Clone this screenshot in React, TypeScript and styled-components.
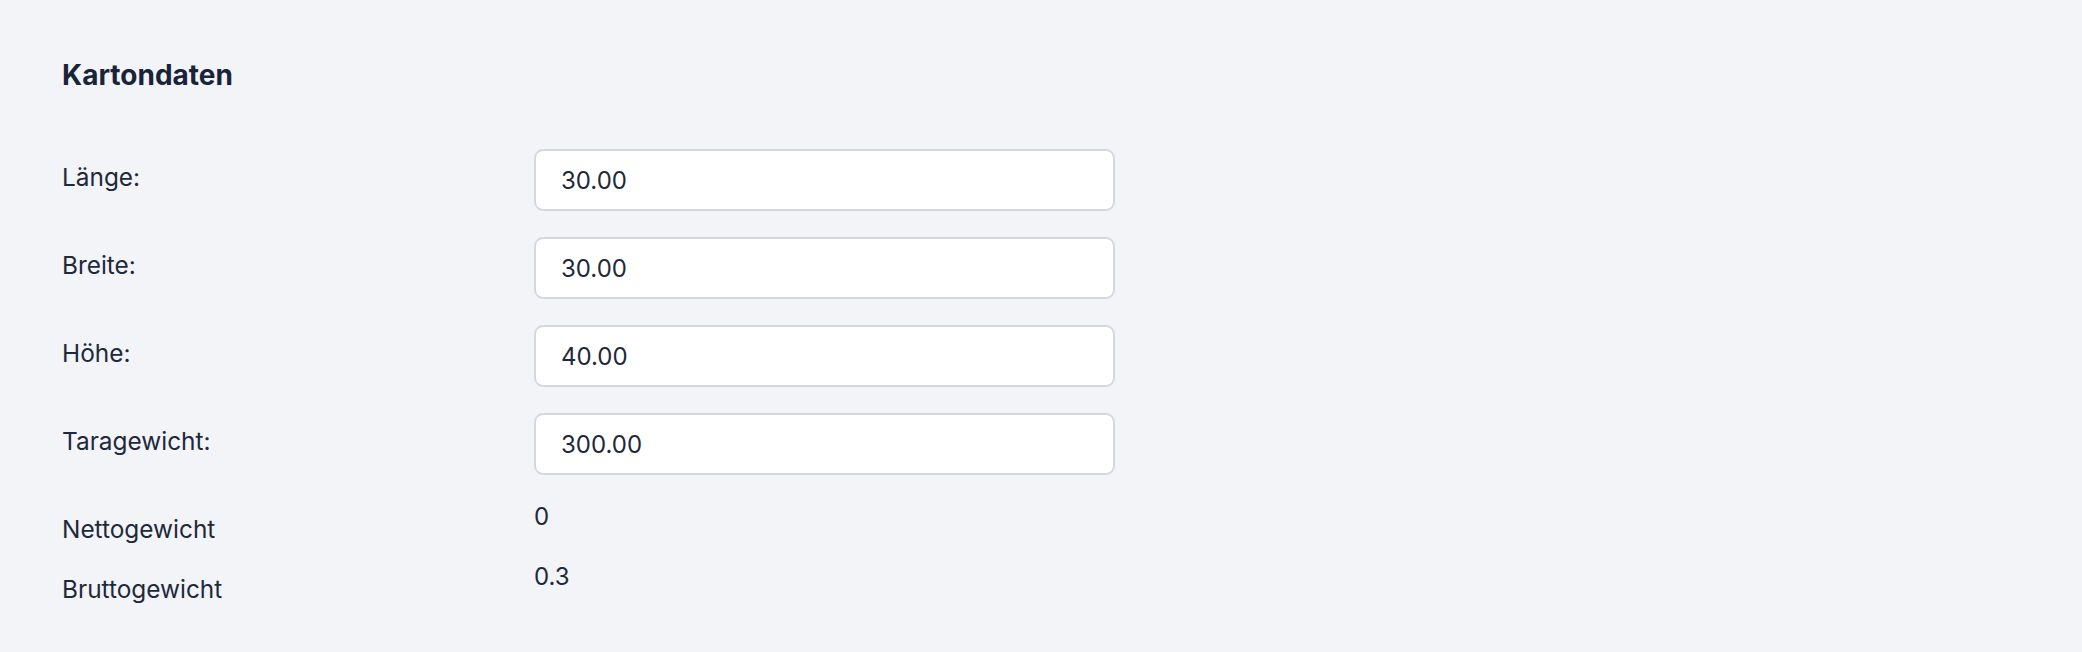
import styled, { createGlobalStyle } from "styled-components";

const GlobalStyle = createGlobalStyle`
  html, body {
    margin: 0;
    padding: 0;
    background: #f3f4f8;
  }
  body {
    font-family: Inter, "Noto Sans", "Liberation Sans", sans-serif;
    color: #1e293b;
  }
`;

const Page = styled.div`
  box-sizing: border-box;
  width: 2082px;
  min-height: 652px;
  padding: 53px 62px 0 62px;
  background: #f3f4f8;
`;

const Title = styled.h2`
  margin: 0 0 51px 0;
  font-size: 28px;
  line-height: 45px;
  font-weight: 700;
  color: #1a2438;
`;

const Form = styled.div`
  display: flex;
  flex-direction: column;
`;

const Row = styled.div<{ $gap: number }>`
  display: grid;
  grid-template-columns: 472px 581px;
  align-items: start;
  margin-bottom: ${(p) => p.$gap}px;
`;

const Label = styled.label<{ $offset: number }>`
  padding-top: ${(p) => p.$offset}px;
  font-size: 24.4px;
  line-height: 36px;
  color: #1e293b;
`;

const Input = styled.input`
  box-sizing: border-box;
  width: 581px;
  height: 62px;
  padding: 0 25px;
  border: 2px solid #d4d8df;
  border-radius: 9px;
  background: #ffffff;
  font-family: inherit;
  font-size: 24px;
  color: #1e293b;
  outline: none;
`;

const Value = styled.div`
  font-size: 24px;
  line-height: 36px;
  color: #1e293b;
`;

const fields = [
  { label: "Länge:", value: "30.00" },
  { label: "Breite:", value: "30.00" },
  { label: "Höhe:", value: "40.00" },
  { label: "Taragewicht:", value: "300.00" },
];

const totals = [
  { label: "Nettogewicht", value: "0" },
  { label: "Bruttogewicht", value: "0.3" },
];

export default function App() {
  return (
    <>
      <GlobalStyle />
      <Page>
        <Title>Kartondaten</Title>
        <Form>
          {fields.map((f, i) => (
            <Row key={f.label} $gap={i === fields.length - 1 ? 24 : 26}>
              <Label $offset={10}>{f.label}</Label>
              <Input defaultValue={f.value} />
            </Row>
          ))}
          {totals.map((t) => (
            <Row key={t.label} $gap={12}>
              <Label $offset={12}>{t.label}</Label>
              <Value>{t.value}</Value>
            </Row>
          ))}
        </Form>
      </Page>
    </>
  );
}
